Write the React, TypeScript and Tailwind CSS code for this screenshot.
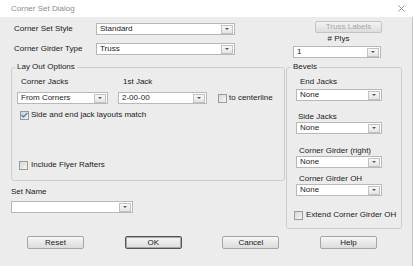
import React from "react";

type SelectProps = {
  value: string;
  className: string;
};

function Select({ value, className }: SelectProps) {
  return (
    <div className={`flex h-[12px] items-center border border-[#b8b8b8] bg-white ${className}`}>
      <span className="flex-1 truncate pl-[3px] text-[8px] leading-[10px] text-[#1a1a1a]">{value}</span>
      <span className="mr-[1px] flex h-[9px] w-[12px] items-center justify-center border border-[#c2c2c2] bg-linear-to-b from-[#f8f8f8] to-[#e4e4e4]">
        <svg width="4" height="2" viewBox="0 0 4 2">
          <path d="M0 0h4L2 2z" fill="#555" />
        </svg>
      </span>
    </div>
  );
}

function Check({ checked }: { checked?: boolean }) {
  return (
    <span
      className={`flex h-[9px] w-[9px] shrink-0 items-center justify-center border border-[#9a9a9a] ${
        checked ? "bg-linear-to-br from-[#c9d4e3] to-[#eef2f7]" : "bg-linear-to-br from-[#d8d8d8] to-[#f5f5f5]"
      }`}
    >
      {checked ? (
        <svg width="7" height="6" viewBox="0 0 7 6">
          <path d="M0.6 3 L2.6 5 L6.4 0.8" stroke="#5a6d90" strokeWidth="1.2" fill="none" />
        </svg>
      ) : null}
    </span>
  );
}

function Btn({ label, primary }: { label: string; primary?: boolean }) {
  return (
    <div
      className={`flex h-[13px] w-[57px] items-center justify-center rounded-[2px] bg-linear-to-b from-[#f6f6f6] to-[#dcdcdc] text-[8px] leading-[10px] text-[#1a1a1a] ${
        primary ? "border border-[#555] shadow-[inset_0_0_0_1px_#a8a8a8]" : "border border-[#a5a5a5]"
      }`}
    >
      {label}
    </div>
  );
}

export default function App() {
  return (
    <div className="h-[266px] w-[414px] overflow-hidden bg-white font-['Liberation_Sans',Arial,sans-serif] text-[#1a1a1a]">
      {/* title bar */}
      <div className="flex h-[17px] items-center justify-between bg-white pl-[11px] pr-[9px]">
        <span className="text-[8px] leading-[10px] text-[#8a8a8a]">Corner Set Dialog</span>
        <svg width="7" height="7" viewBox="0 0 7 7">
          <path d="M0.5 0.5L6.5 6.5M6.5 0.5L0.5 6.5" stroke="#8a8a8a" strokeWidth="0.9" />
        </svg>
      </div>

      <div className="h-[249px] w-[413px] border-r border-[#c4c4c4] bg-[#ececec]">
        {/* top controls */}
        <div className="flex h-[45px]">
          <div className="w-[293px] pl-[14px] pt-[6px]">
            <div className="flex items-center">
              <span className="w-[82px] text-[8px] leading-[10px]">Corner Set Style</span>
              <Select value="Standard" className="w-[139px]" />
            </div>
            <div className="mt-[8px] flex items-center">
              <span className="w-[82px] text-[8px] leading-[10px]">Corner Girder Type</span>
              <Select value="Truss" className="w-[139px]" />
            </div>
          </div>
          <div className="flex w-[89px] flex-col pt-[4px]">
            <div className="ml-[22px] flex h-[12px] w-[67px] items-center justify-center rounded-[2px] border border-[#c4c4c4] bg-linear-to-b from-[#f4f4f4] to-[#dddddd] text-[8px] leading-[10px] text-[#a8a8a8]">
              Truss Labels
            </div>
            <div className="mt-[1px] pl-[2px] text-center text-[8px] leading-[10px]"># Plys</div>
            <Select value="1" className="mt-[2px] w-[88px]" />
          </div>
        </div>

        {/* groups */}
        <div className="flex pl-[11px]">
          <div className="w-[274px]">
            <fieldset className="h-[119px] w-[274px] rounded-[3px] border border-[#cdcdcd]">
              <legend className="ml-[3px] px-[2px] text-[8px] leading-[10px]">Lay Out Options</legend>
              <div className="pl-[5px]">
                <div className="mt-[5px] flex h-[10px] text-[8px] leading-[10px]">
                  <span className="w-[101px] pl-[4px]">Corner Jacks</span>
                  <span className="pl-[5px]">1st Jack</span>
                </div>
                <div className="mt-[5px] flex items-center">
                  <Select value="From Corners" className="w-[91px]" />
                  <Select value="2-00-00" className="ml-[10px] w-[89px]" />
                  <span className="ml-[11px]">
                    <Check />
                  </span>
                  <span className="ml-[2px] text-[8px] leading-[10px]">to centerline</span>
                </div>
                <div className="mt-[6px] flex items-center pl-[3px]">
                  <Check checked />
                  <span className="ml-[2px] text-[8px] leading-[10px]">Side and end jack layouts match</span>
                </div>
                <div className="mt-[40px] flex items-center pl-[2px]">
                  <Check />
                  <span className="ml-[3px] text-[8px] leading-[10px]">Include Flyer Rafters</span>
                </div>
              </div>
            </fieldset>
            <div className="mt-[6px] text-[8px] leading-[10px]">Set Name</div>
            <Select value="" className="mt-[4px] w-[122px]" />
          </div>

          <fieldset className="ml-[1px] h-[167px] w-[116px] rounded-[3px] border border-[#cdcdcd]">
            <legend className="ml-[4px] px-[2px] text-[8px] leading-[10px]">Bevels</legend>
            <div className="pl-[9px]">
              <div className="mt-[5px] pl-[4px] text-[8px] leading-[10px]">End Jacks</div>
              <Select value="None" className="mt-[2px] w-[86px]" />
              <div className="mt-[11px] pl-[2px] text-[8px] leading-[10px]">Side Jacks</div>
              <Select value="None" className="w-[86px]" />
              <div className="mt-[12px] pl-[3px] text-[8px] leading-[10px]">Corner Girder (right)</div>
              <Select value="None" className="w-[86px]" />
              <div className="mt-[6px] pl-[3px] text-[8px] leading-[10px]">Corner Girder OH</div>
              <Select value="None" className="w-[86px]" />
              <div className="ml-[-2px] mt-[14px] flex items-center">
                <Check />
                <span className="ml-[3px] text-[8px] leading-[10px]">Extend Corner Girder OH</span>
              </div>
            </div>
          </fieldset>
        </div>

        {/* buttons */}
        <div className="mt-[7px] flex gap-[40.7px] pl-[27px]">
          <Btn label="Reset" />
          <Btn label="OK" primary />
          <Btn label="Cancel" />
          <Btn label="Help" />
        </div>
      </div>
    </div>
  );
}
